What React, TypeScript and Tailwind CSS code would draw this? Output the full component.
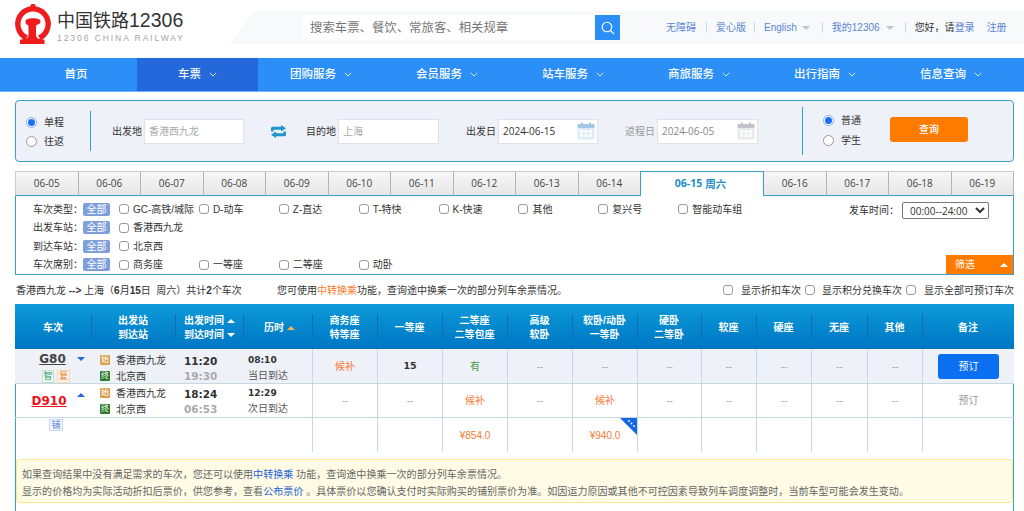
import React from "react";

const FONT = "font-['Liberation_Sans','Noto_Sans_CJK_SC',sans-serif]";
const COLS =
  "grid grid-cols-[76px_84px_68px_69px_65px_65px_65px_65px_65px_64px_55px_55px_56px_55px_92px]";

function Logo() {
  return (
    <svg width="36" height="40" viewBox="0 0 36 40" className="shrink-0">
      <path
        d="M10 36.100A18 18 0 0 1 15.500 2.200 2.500 2.500 0 0 1 20.500 2.200 18 18 0 0 1 26 36.100L23 31.500A12.500 12.500 0 1 0 13 31.500Z"
        fill="#ee1c1c"
      />
      <path
        d="M10.500 17.500c0-2.200 3-3.200 7.500-3.200s7.500 1 7.500 3.200c0 1.600-1 2.500-2.600 2.900-1.400.3-1.900 1-1.900 2.300v8c0 2.400 1 3.600 3.200 4.100l5.300 1V40H5v-4.200l5.300-1c2.200-.5 3.200-1.700 3.200-4.100v-8c0-1.300-.5-2-1.900-2.300-.1 0-1.100-.5-1.100-2.900z"
        fill="#ee1c1c"
      />
    </svg>
  );
}

function Caret({ up, className }: { up?: boolean; className: string }) {
  return (
    <span
      className={`inline-block w-0 h-0 border-x-[4px] border-x-transparent ${
        up ? "border-b-[4px]" : "border-t-[4px]"
      } ${className}`}
    />
  );
}

function Chevron() {
  return (
    <svg width="8" height="5" viewBox="0 0 8 5" fill="none" stroke="#d5e8fd" strokeWidth="1" className="ml-[8px]">
      <path d="M0.800 0.800L4 4L7.200 0.800" />
    </svg>
  );
}

function NavItem({ label, active, first, arrow = true }: { label: string; active?: boolean; first?: boolean; arrow?: boolean }) {
  return (
    <div
      className={`flex items-center justify-center h-full text-[11.500px] font-medium text-white ${
        first ? "w-[122px]" : active ? "w-[121px] bg-[#2468dc]" : "w-[126px]"
      }`}
    >
      <span>{label}</span>
      {arrow && <Chevron />}
    </div>
  );
}

function Sep({ className = "" }: { className?: string }) {
  return <span className={`block w-px h-[11px] bg-[#c9d8e8] ${className}`} />;
}

function Radio({ checked, label }: { checked?: boolean; label: string }) {
  return (
    <label className="flex items-center h-[20px] gap-[7px] text-[10px] text-[#333]">
      <span
        className={`flex items-center justify-center w-[11px] h-[11px] rounded-full border bg-white ${
          checked ? "border-[#7fb0f5]" : "border-[#999]"
        }`}
      >
        {checked && <span className="block w-[7px] h-[7px] rounded-full bg-[#1d6ff2]" />}
      </span>
      {label}
    </label>
  );
}

function Check({ label, className = "" }: { label: string; className?: string }) {
  return (
    <label className={`flex items-center gap-[4px] text-[10px] text-[#333] whitespace-nowrap ${className}`}>
      <span className="block shrink-0 w-[10px] h-[10px] rounded-[3px] border border-[#999] bg-white" />
      {label}
    </label>
  );
}

function Calendar({ color }: { color: string }) {
  return (
    <svg width="18" height="18" viewBox="0 0 18 18" className="shrink-0">
      <rect x="0.500" y="2" width="17" height="15.500" rx="1.500" fill={color} opacity="0.35" />
      <rect x="0.500" y="2" width="17" height="4" rx="1" fill={color} />
      <rect x="4" y="0.500" width="2" height="3" fill={color} />
      <rect x="12" y="0.500" width="2" height="3" fill={color} />
      {[3, 7.5, 12].map((x) =>
        [8, 12].map((y) => <rect key={`${x}-${y}`} x={x} y={y} width="3" height="3" fill="#fff" />)
      )}
    </svg>
  );
}

function Field({ label, value, labelClass, valueClass, w, icon }: { label: string; value: string; labelClass: string; valueClass: string; w: string; icon?: string }) {
  return (
    <div className="flex items-center">
      <span className={`text-[10px] mr-[2px] ${labelClass}`}>{label}</span>
      <div className={`flex items-center justify-between h-[25px] bg-white border border-[#dde3ec] pl-[4px] pr-[2px] text-[10px] ${w} ${valueClass}`}>
        <span>{value}</span>
        {icon && <Calendar color={icon} />}
      </div>
    </div>
  );
}

function AllRow({ label, items, step = true }: { label: string; items: string[]; step?: boolean }) {
  return (
    <div className="flex items-center h-[18.500px]">
      <span className="w-[50px] text-[10px] text-[#333] whitespace-nowrap">{label}：</span>
      <span className="flex items-center justify-center w-[27px] h-[13px] mr-[9px] rounded-[2px] bg-[#7f9fdc] text-[10px] text-white">全部</span>
      {items.map((t) => (
        <Check key={t} label={t} className={step ? "w-[79.900px]" : ""} />
      ))}
    </div>
  );
}

function Station({ kind, name }: { kind: "始" | "终"; name: string }) {
  return (
    <div className="flex items-center h-[16px]">
      <span
        className={`flex items-center justify-center w-[10px] h-[10px] mr-[6px] rounded-[1px] text-[8px] leading-none text-white ${
          kind === "始" ? "bg-[#d8a04e]" : "bg-[#2c7a2c]"
        }`}
      >
        {kind}
      </span>
      <span className="text-[10px] text-[#333]">{name}</span>
    </div>
  );
}

function TrainInfo({ dep, arr, dur, note, top }: { dep: string; arr: string; dur: string; note: string; top: string }) {
  return (
    <>
      <div className={`pl-[9px] flex flex-col justify-center ${top}`}>
        <Station kind="始" name="香港西九龙" />
        <Station kind="终" name="北京西" />
      </div>
      <div className={`pl-[9px] flex flex-col justify-center font-['DejaVu_Sans',sans-serif] font-bold text-[10.500px] ${top}`}>
        <div className="h-[16px] leading-[16px] text-[#333]">{dep}</div>
        <div className="h-[15px] leading-[15px] text-[#aaa]">{arr}</div>
      </div>
      <div className={`pl-[5px] flex flex-col justify-center ${top}`}>
        <div className="h-[16px] leading-[16px] font-['DejaVu_Sans',sans-serif] font-bold text-[9px] text-[#333]">{dur}</div>
        <div className="h-[16px] leading-[16px] text-[10px] text-[#555]">{note}</div>
      </div>
    </>
  );
}

function Seat({ v }: { v: string }) {
  const cls =
    v === "候补"
      ? "text-[10px] text-[#f97a32]"
      : v === "有"
      ? "text-[10px] text-[#3f9a3f]"
      : v === "15"
      ? "font-['DejaVu_Sans',sans-serif] font-bold text-[9.500px] text-[#333]"
      : "text-[10px] text-[#aaa]";
  return <div className={`flex items-center justify-center border-l border-[#c5d9e2] ${cls}`}>{v}</div>;
}

const HEAD: string[][] = [
  ["商务座", "特等座"],
  ["一等座"],
  ["二等座", "二等包座"],
  ["高级", "软卧"],
  ["软卧/动卧", "一等卧"],
  ["硬卧", "二等卧"],
  ["软座"],
  ["硬座"],
  ["无座"],
  ["其他"],
  ["备注"],
];

function HeadCell({ lines, extra }: { lines: string[]; extra?: React.ReactNode }) {
  return (
    <div className="relative flex flex-col items-center justify-center h-full pt-[2px] leading-[14px]">
      <span className="absolute left-0 top-[10px] bottom-[10px] w-px bg-[#0a6fb0]" />
      {lines.map((l) => (
        <span key={l}>{l}</span>
      ))}
      {extra}
    </div>
  );
}

export default function App() {
  const dates1 = ["06-05", "06-06", "06-07", "06-08", "06-09", "06-10", "06-11", "06-12", "06-13", "06-14"];
  const dates2 = ["06-16", "06-17", "06-18", "06-19"];
  return (
    <div className={`w-[1024px] h-[511px] overflow-hidden bg-white ${FONT}`}>
      {/* Header */}
      <header className="flex h-[58px]">
        <div className="flex w-[230px] pl-[15px] pt-[4px] gap-[6px]">
          <Logo />
          <div className="pt-[4px]">
            <div className="flex items-baseline h-[23px] text-[18px] leading-[23px] text-[#333] font-['Noto_Sans_CJK_SC',sans-serif]">
              中国铁路<span className="font-['Liberation_Sans',sans-serif] text-[19.500px]">12306</span>
            </div>
            <div className="mt-[2px] text-[8.500px] leading-[10px] tracking-[1.940px] text-[#a3a3a3] whitespace-nowrap">12306 CHINA RAILWAY</div>
          </div>
        </div>
        <div className="flex flex-1 items-center h-[33px] mt-[11px] pl-[72px] bg-[#f8f9fa] [clip-path:polygon(24px_0,100%_0,100%_100%,0_100%)]">
          <div className="flex w-[318px] h-[25px] shrink-0">
            <div className="flex items-center flex-1 pl-[8px] pt-[2px] bg-white text-[12.400px] text-[#777]">搜索车票、餐饮、常旅客、相关规章</div>
            <div className="flex items-center justify-center w-[25px] bg-[#2b8ff7]">
              <svg width="14" height="14" viewBox="0 0 14 14" fill="none" stroke="#fff" strokeWidth="1.100">
                <circle cx="6" cy="6" r="4.800" />
                <path d="M9.500 9.500L13 13" />
              </svg>
            </div>
          </div>
          <div className="flex items-center ml-[46px] text-[10px] text-[#5a86d5] whitespace-nowrap">
            <span>无障碍</span>
            <Sep className="mx-[9.500px]" />
            <span>爱心版</span>
            <Sep className="ml-[8px] mr-[9px]" />
            <span>English</span>
            <Caret className="ml-[5px] mr-[12px] border-t-[#b5c9de]" />
            <Sep />
            <span className="ml-[9px]">我的12306</span>
            <Caret className="ml-[6px] mr-[11px] border-t-[#b5c9de]" />
            <Sep />
            <span className="ml-[9px] text-[#333]">您好，请</span>
            <span>登录</span>
            <span className="ml-[12px]">注册</span>
          </div>
        </div>
      </header>

      {/* Nav */}
      <nav className="flex h-[34px] pl-[15px] bg-[#2b8ff7] border-b border-[#6db2fa]">
        <NavItem label="首页" first arrow={false} />
        <NavItem label="车票" active />
        <NavItem label="团购服务" />
        <NavItem label="会员服务" />
        <NavItem label="站车服务" />
        <NavItem label="商旅服务" />
        <NavItem label="出行指南" />
        <NavItem label="信息查询" />
      </nav>

      <main className="pl-[15px] pr-[9px] w-[1023px]">
        {/* Search form */}
        <section className="flex items-center h-[62px] mt-[8px] border border-[#3d9dc9] rounded-[4px] bg-[#eef1f8]">
          <div className="flex flex-col justify-center w-[75px] h-[40px] pl-[10px] pt-[2px] border-r border-[#3d9dc9]">
            <Radio checked label="单程" />
            <Radio label="往返" />
          </div>
          <div className="ml-[21px]">
            <Field label="出发地" value="香港西九龙" labelClass="text-[#333]" valueClass="text-[#aaa]" w="w-[100px]" />
          </div>
          <svg width="15" height="13" viewBox="0 0 15 13" className="ml-[27px] mr-[20px] shrink-0" fill="#1e96c8">
            <path d="M0 6.500V3.200A1.500 1.500 0 0 1 1.500 1.700H10V0l5 3.300-5 3.200V4.700H2.500v1.800z" />
            <path d="M15 6.500v3.300a1.500 1.500 0 0 1-1.500 1.500H5V13L0 9.700l5-3.200v1.800h7.500V6.500z" />
          </svg>
          <Field label="目的地" value="上海" labelClass="text-[#333]" valueClass="text-[#aaa]" w="w-[101px]" />
          <div className="ml-[27px]">
            <Field label="出发日" value="2024-06-15" labelClass="text-[#333]" valueClass="text-[#333] font-['Open_Sans',sans-serif]" w="w-[100px]" icon="#a3c6e8" />
          </div>
          <div className="ml-[27px]">
            <Field label="返程日" value="2024-06-05" labelClass="text-[#999]" valueClass="text-[#888] font-['Open_Sans',sans-serif]" w="w-[101px]" icon="#c0c4c8" />
          </div>
          <div className="flex flex-col justify-center w-[88px] h-[48px] ml-[44px] pl-[20px] pb-[2px] border-l border-[#3d9dc9]">
            <Radio checked label="普通" />
            <Radio label="学生" />
          </div>
          <div className="flex items-center justify-center w-[78px] h-[25px] rounded-[3px] bg-[#ff7b00] text-[10px] font-medium text-white mb-[4px]">查询</div>
        </section>

        {/* Date tabs */}
        <div className="flex h-[25px] mt-[9px] font-['Open_Sans','Noto_Sans_CJK_SC',sans-serif] text-[10px] text-[#444]">
          {dates1.map((d) => (
            <div key={d} className="flex flex-1 items-center justify-center border-t border-r border-t-[#ccc] border-r-[#b5b5b5] first:border-l first:border-l-[#ccc] border-b border-b-[#3d9dc9] bg-linear-to-b from-[#f7f7f7] to-[#e6e6e6]">
              {d}
            </div>
          ))}
          <div className="flex items-center justify-center w-[124px] shrink-0 ml-[-1px] pr-[3px] border-x border-t border-[#3d9dc9] bg-white font-bold text-[10.500px] text-[#1e8cc8]">
            06-15 <span className="ml-[3px] font-['Noto_Sans_CJK_SC',sans-serif]">周六</span>
          </div>
          {dates2.map((d) => (
            <div key={d} className="flex flex-1 items-center justify-center border-t border-r border-t-[#ccc] border-r-[#b5b5b5] border-b border-b-[#3d9dc9] bg-linear-to-b from-[#f7f7f7] to-[#e6e6e6]">
              {d}
            </div>
          ))}
        </div>

        {/* Filter */}
        <section className="relative h-[79px] pl-[17px] pt-[4px] border-x border-b border-[#3d9dc9]">
          <AllRow label="车次类型" items={["GC-高铁/城际", "D-动车", "Z-直达", "T-特快", "K-快速", "其他", "复兴号", "智能动车组"]} />
          <AllRow label="出发车站" items={["香港西九龙"]} />
          <AllRow label="到达车站" items={["北京西"]} />
          <AllRow label="车次席别" items={["商务座", "一等座", "二等座", "动卧"]} />
          <div className="absolute right-[24px] top-[6px] flex items-center text-[10px] text-[#333]">
            <span className="mr-[3px]">发车时间：</span>
            <select className="w-[87px] h-[17px] px-[3px] rounded-[2px] border border-[#777] bg-white text-[10px] text-[#333] font-['Open_Sans',sans-serif] outline-none">
              <option>00:00--24:00</option>
            </select>
          </div>
          <div className="absolute right-0 bottom-0 flex items-center justify-between w-[67px] h-[19px] pl-[9px] pr-[5px] bg-[#ff7b00] text-[10px] text-white">
            筛选
            <Caret up className="border-b-white" />
          </div>
        </section>

        {/* Summary */}
        <div className="flex items-center h-[30px] text-[10px] text-[#333] whitespace-nowrap">
          <span className="ml-px w-[261px]">
            香港西九龙 <b>--&gt;</b> 上海（<b>6</b>月<b>15</b>日&nbsp;&nbsp;周六）共计<b>2</b>个车次
          </span>
          <span>
            您可使用<span className="text-[#f97a1e]">中转换乘</span>功能，查询途中换乘一次的部分列车余票情况。
          </span>
          <div className="flex items-center ml-auto">
            <Check label="显示折扣车次" className="gap-[8px] mr-[4px]" />
            <Check label="显示积分兑换车次" className="gap-[7px] mr-[4px]" />
            <Check label="显示全部可预订车次" className="gap-[8px]" />
          </div>
        </div>

        {/* Table */}
        <section className="border-x border-[#3d9dc9] h-[207px] mt-[-1px]">
          <div className={`${COLS} h-[45px] -mx-px bg-linear-to-b from-[#0e9ad8] to-[#0076c4] text-[10px] font-bold text-white`}>
            <div className="flex items-center justify-center pt-[2px]">车次</div>
            <HeadCell lines={["出发站", "到达站"]} />
            <div className="relative flex flex-col items-start justify-center h-full pl-[9px] pt-[2px] leading-[14px]">
              <span className="absolute left-0 top-[10px] bottom-[10px] w-px bg-[#0a6fb0]" />
              <span className="flex items-center gap-[3px]">出发时间<Caret up className="border-b-white" /></span>
              <span className="flex items-center gap-[3px]">到达时间<Caret className="border-t-white" /></span>
            </div>
            <div className="relative flex items-center justify-center h-full pt-[2px] pl-[4px]">
              <span className="absolute left-0 top-[10px] bottom-[10px] w-px bg-[#0a6fb0]" />
              <span className="flex items-center gap-[3px]">历时<Caret up className="border-b-[#ffb347]" /></span>
            </div>
            {HEAD.map((h) => (
              <HeadCell key={h.join()} lines={h} />
            ))}
          </div>

          <div className={`${COLS} h-[35px] -mx-px bg-[#eef1f8] border-b border-[#c5d9e2]`}>
            <div className="flex flex-col items-center">
              <div className="flex items-center h-[20px] pl-[18px]">
                <span className="font-['DejaVu_Sans',sans-serif] font-bold text-[12px] text-[#444] underline">G80</span>
                <Caret className="ml-[11px] border-t-[#2468dc]" />
              </div>
              <div className="flex gap-[3px] mt-[1px] ml-[6px] text-[9px] leading-[11px]">
                <span className="px-[0.500px] border border-[#bfe3cf] bg-[#eefaf3] text-[#2f9a66]">智</span>
                <span className="px-[1px] border border-[#fbd9b5] bg-[#fff5ea] text-[#ef7b2a]">复</span>
              </div>
            </div>
            <TrainInfo top="pt-[3px]" dep="11:20" arr="19:30" dur="08:10" note="当日到达" />
            {["候补", "15", "有", "--", "--", "--", "--", "--", "--", "--"].map((v, i) => (
              <Seat key={i} v={v} />
            ))}
            <div className="flex items-center justify-center border-l border-[#c5d9e2]">
              <span className="flex items-center justify-center w-[61px] h-[25px] rounded-[3px] bg-[#0a6ff0] text-[10px] text-white">预订</span>
            </div>
          </div>

          <div className={`${COLS} h-[34px] -mx-px border-b border-[#c5d9e2]`}>
            <div className="flex items-start justify-center pl-[10px] pt-[7px]">
              <span className="font-['DejaVu_Sans',sans-serif] font-bold text-[12px] leading-[20px] text-[#e8121a] underline">D910</span>
              <Caret up className="ml-[10px] mt-[2px] border-b-[#2468dc]" />
            </div>
            <TrainInfo top="pt-[1px]" dep="18:24" arr="06:53" dur="12:29" note="次日到达" />
            {["--", "--", "候补", "--", "候补", "--", "--", "--", "--", "--"].map((v, i) => (
              <Seat key={i} v={v} />
            ))}
            <div className="flex items-center justify-center border-l border-[#c5d9e2] text-[10px] text-[#999]">预订</div>
          </div>

          <div className={`${COLS} h-[34px] -mx-px`}>
            <div className="flex justify-center pl-[6px]">
              <span className="h-[12px] px-[1px] mt-[1px] border border-[#c8d6f5] bg-[#f3f6ff] text-[9px] leading-[11px] text-[#5a86d5]">铺</span>
            </div>
            <div />
            <div />
            <div />
            <Seat v="" />
            <Seat v="" />
            <div className="flex items-center justify-center border-l border-[#c5d9e2] text-[10px] text-[#f97a32]">¥854.0</div>
            <Seat v="" />
            <div className="relative flex items-center justify-center border-l border-[#c5d9e2] text-[10px] text-[#f97a32]">
              ¥940.0
              <svg width="17" height="17" viewBox="0 0 17 17" className="absolute right-0 top-0">
                <path d="M0 0H17V17z" fill="#1468e8" />
                <circle cx="9" cy="3" r="0.900" fill="#fff" />
                <circle cx="11.500" cy="5.500" r="0.900" fill="#fff" />
                <circle cx="14" cy="8" r="0.900" fill="#fff" />
              </svg>
            </div>
            <Seat v="" />
            <Seat v="" />
            <Seat v="" />
            <Seat v="" />
            <Seat v="" />
            <Seat v="" />
          </div>

          {/* Note */}
          <div className="h-[44px] mt-[7px] pl-[5px] pt-[5.500px] rounded-[3px] border border-[#ffe98f] bg-[#fffbe5] text-[10.050px] leading-[17px] text-[#666] whitespace-nowrap">
            <div>
              如果查询结果中没有满足需求的车次，您还可以使用<span className="text-[#1a5fd8]">中转换乘</span> 功能，查询途中换乘一次的部分列车余票情况。
            </div>
            <div>
              显示的价格均为实际活动折扣后票价，供您参考，查看<span className="text-[#1a5fd8]">公布票价</span> 。具体票价以您确认支付时实际购买的铺别票价为准。如因运力原因或其他不可控因素导致列车调度调整时，当前车型可能会发生变动。
            </div>
          </div>
        </section>
      </main>
    </div>
  );
}
